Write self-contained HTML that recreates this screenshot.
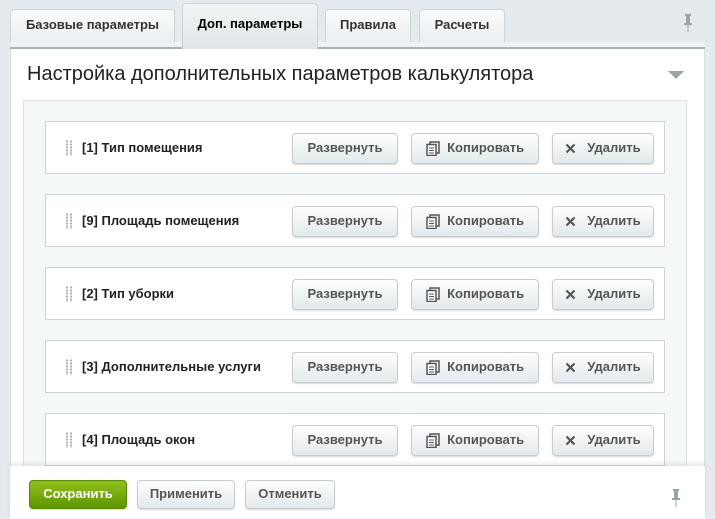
<!DOCTYPE html>
<html><head><meta charset="utf-8"><style>
*{box-sizing:border-box;margin:0;padding:0}
body{width:715px;height:519px;overflow:hidden;background:#e4eaed;font-family:"Liberation Sans",Arial,sans-serif;position:relative}
.tab{position:absolute;top:9px;height:34px;border:1px solid #ccd3d6;border-bottom:none;border-radius:4px 4px 0 0;background:linear-gradient(#fbfcfc,#e9eef0);font-size:13px;color:#333;text-align:center;line-height:30px;font-weight:600}
.tab.act{top:3px;height:46px;background:linear-gradient(#f2f5f6,#dfe6e9);color:#000;font-weight:bold;line-height:40px;z-index:2}
.strip{position:absolute;left:10px;top:42px;width:695px;height:7px;background:#eef2f4;border-bottom:2px solid #a9b2b7}
.panel{position:absolute;left:10px;top:49px;width:695px;height:470px;background:#fff;border-left:1px solid #d8dee1;border-right:1px solid #d8dee1}
h1{position:absolute;left:27px;top:63px;font-weight:normal;font-size:20px;color:#222}
.arrow{position:absolute;left:668px;top:71px;width:0;height:0;border-left:8px solid transparent;border-right:8px solid transparent;border-top:8px solid #9aa3a8}
.inner{position:absolute;left:23px;top:100px;width:664px;height:419px;background:#f5f8f9;border:1px solid #dde2e5}
.row{position:absolute;left:45px;width:620px;height:53px;background:#fff;border:1px solid #cdd3d6}
.drag{position:absolute;left:19px;top:18px;width:8px;height:16px;background-image:radial-gradient(circle,#a9b0b4 1px,transparent 1.3px);background-size:4px 3px}
.lbl{position:absolute;left:36px;top:18px;font-size:13px;font-weight:bold;color:#222}
.btn{position:absolute;top:11px;height:31px;border:1px solid #c5cdd1;border-radius:4px;background:linear-gradient(#fdfefe,#e3e9ec);box-shadow:0 1px 1px rgba(0,0,0,.15);font-size:13px;font-weight:bold;color:#555;line-height:27px;text-align:center}
.footer{position:absolute;left:10px;top:466px;width:695px;height:53px;background:#fff;box-shadow:0 -3px 4px rgba(0,0,0,.08)}
.fb{position:absolute;top:14px;height:29px;border:1px solid #c5cdd1;border-radius:4px;background:linear-gradient(#fdfefe,#e3e9ec);box-shadow:0 1px 1px rgba(0,0,0,.15);font-size:13px;font-weight:bold;color:#555;line-height:26px;text-align:center}
.save{background:linear-gradient(#8fc11d,#5f9400);border-color:#5a8a0a;color:#fff}
svg{vertical-align:middle}
</style></head><body>
<div class="tab" style="left:10px;width:165px">Базовые параметры</div>
<div class="tab act" style="left:182px;width:136px">Доп. параметры</div>
<div class="tab" style="left:325px;width:86px">Правила</div>
<div class="tab" style="left:419px;width:86px">Расчеты</div>
<svg style="position:absolute;left:683px;top:14px" width="10" height="18" viewBox="0 0 10 18"><rect x="2" y="0" width="6" height="2" fill="#9aa3a8"/><rect x="3" y="2" width="4" height="7" fill="#9aa3a8"/><rect x="1" y="9" width="8" height="2" fill="#9aa3a8"/><rect x="4.5" y="11" width="1" height="7" fill="#9aa3a8"/></svg>
<div class="strip"></div>
<div class="panel"></div>
<h1>Настройка дополнительных параметров калькулятора</h1>
<div class="arrow"></div>
<div class="inner"></div>

<div class="row" style="top:121px"><div class="drag"></div><div class="lbl">[1] Тип помещения</div>
<div class="btn" style="left:246px;width:106px">Развернуть</div>
<div class="btn" style="left:365px;width:128px"><svg width="14" height="15" viewBox="0 0 14 15"><rect x="4" y="1" width="9" height="11" fill="none" stroke="#555" stroke-width="1.5"/><rect x="1" y="3.5" width="9" height="11" fill="#fff" stroke="#555" stroke-width="1.5"/><path d="M3 7h5M3 9.5h5M3 12h5" stroke="#555"/></svg>&nbsp;&nbsp;Копировать</div>
<div class="btn" style="left:506px;width:102px"><svg width="11" height="11" viewBox="0 0 11 11"><path d="M1.5 1.5l8 8M9.5 1.5l-8 8" stroke="#555" stroke-width="2.2"/></svg>&nbsp;&nbsp;&nbsp;Удалить</div></div>

<div class="row" style="top:194px"><div class="drag"></div><div class="lbl">[9] Площадь помещения</div>
<div class="btn" style="left:246px;width:106px">Развернуть</div>
<div class="btn" style="left:365px;width:128px"><svg width="14" height="15" viewBox="0 0 14 15"><rect x="4" y="1" width="9" height="11" fill="none" stroke="#555" stroke-width="1.5"/><rect x="1" y="3.5" width="9" height="11" fill="#fff" stroke="#555" stroke-width="1.5"/><path d="M3 7h5M3 9.5h5M3 12h5" stroke="#555"/></svg>&nbsp;&nbsp;Копировать</div>
<div class="btn" style="left:506px;width:102px"><svg width="11" height="11" viewBox="0 0 11 11"><path d="M1.5 1.5l8 8M9.5 1.5l-8 8" stroke="#555" stroke-width="2.2"/></svg>&nbsp;&nbsp;&nbsp;Удалить</div></div>

<div class="row" style="top:267px"><div class="drag"></div><div class="lbl">[2] Тип уборки</div>
<div class="btn" style="left:246px;width:106px">Развернуть</div>
<div class="btn" style="left:365px;width:128px"><svg width="14" height="15" viewBox="0 0 14 15"><rect x="4" y="1" width="9" height="11" fill="none" stroke="#555" stroke-width="1.5"/><rect x="1" y="3.5" width="9" height="11" fill="#fff" stroke="#555" stroke-width="1.5"/><path d="M3 7h5M3 9.5h5M3 12h5" stroke="#555"/></svg>&nbsp;&nbsp;Копировать</div>
<div class="btn" style="left:506px;width:102px"><svg width="11" height="11" viewBox="0 0 11 11"><path d="M1.5 1.5l8 8M9.5 1.5l-8 8" stroke="#555" stroke-width="2.2"/></svg>&nbsp;&nbsp;&nbsp;Удалить</div></div>

<div class="row" style="top:340px"><div class="drag"></div><div class="lbl">[3] Дополнительные услуги</div>
<div class="btn" style="left:246px;width:106px">Развернуть</div>
<div class="btn" style="left:365px;width:128px"><svg width="14" height="15" viewBox="0 0 14 15"><rect x="4" y="1" width="9" height="11" fill="none" stroke="#555" stroke-width="1.5"/><rect x="1" y="3.5" width="9" height="11" fill="#fff" stroke="#555" stroke-width="1.5"/><path d="M3 7h5M3 9.5h5M3 12h5" stroke="#555"/></svg>&nbsp;&nbsp;Копировать</div>
<div class="btn" style="left:506px;width:102px"><svg width="11" height="11" viewBox="0 0 11 11"><path d="M1.5 1.5l8 8M9.5 1.5l-8 8" stroke="#555" stroke-width="2.2"/></svg>&nbsp;&nbsp;&nbsp;Удалить</div></div>

<div class="row" style="top:413px"><div class="drag"></div><div class="lbl">[4] Площадь окон</div>
<div class="btn" style="left:246px;width:106px">Развернуть</div>
<div class="btn" style="left:365px;width:128px"><svg width="14" height="15" viewBox="0 0 14 15"><rect x="4" y="1" width="9" height="11" fill="none" stroke="#555" stroke-width="1.5"/><rect x="1" y="3.5" width="9" height="11" fill="#fff" stroke="#555" stroke-width="1.5"/><path d="M3 7h5M3 9.5h5M3 12h5" stroke="#555"/></svg>&nbsp;&nbsp;Копировать</div>
<div class="btn" style="left:506px;width:102px"><svg width="11" height="11" viewBox="0 0 11 11"><path d="M1.5 1.5l8 8M9.5 1.5l-8 8" stroke="#555" stroke-width="2.2"/></svg>&nbsp;&nbsp;&nbsp;Удалить</div></div>

<div class="footer">
<div class="fb save" style="left:19px;width:98px">Сохранить</div>
<div class="fb" style="left:127px;width:98px">Применить</div>
<div class="fb" style="left:235px;width:90px">Отменить</div>
<svg style="position:absolute;left:661px;top:23px" width="10" height="18" viewBox="0 0 10 18"><rect x="2" y="0" width="6" height="2" fill="#9aa3a8"/><rect x="3" y="2" width="4" height="7" fill="#9aa3a8"/><rect x="1" y="9" width="8" height="2" fill="#9aa3a8"/><rect x="4.5" y="11" width="1" height="7" fill="#9aa3a8"/></svg>
</div>
</body></html>
